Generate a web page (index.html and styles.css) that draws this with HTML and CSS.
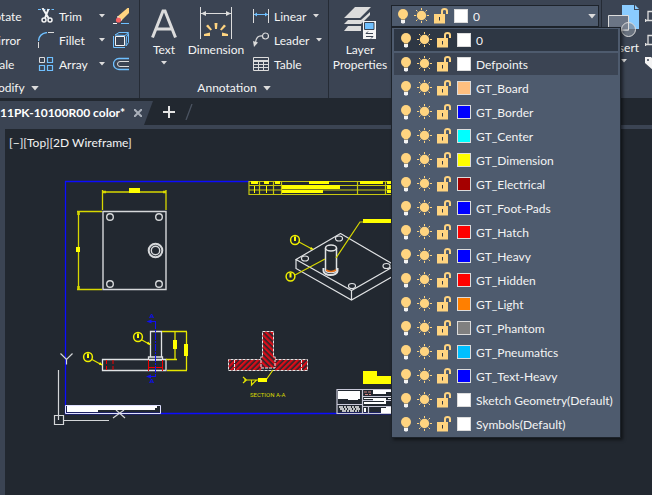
FILE: index.html
```html
<!DOCTYPE html>
<html lang="en">
<head>
<meta charset="utf-8">
<title>11PK-10100R00 color</title>
<link rel="stylesheet" href="styles.css">
</head>
<body>
<svg class="defs" width="0" height="0" aria-hidden="true">
  <symbol id="bulb" viewBox="0 0 16 16">
    <circle cx="8" cy="6" r="5" fill="#ffd480"/><path d="M5 8h6l-1 3.500H6z" fill="#ffd480"/>
    <path d="M6 12h4v2.500l-1 1H7l-1-1z" fill="#f4f4f4"/>
  </symbol>
  <symbol id="sun" viewBox="0 0 16 16">
    <circle cx="7.500" cy="7.500" r="4.700" fill="#ffd480"/>
    <path d="M7.500 0v2M7.500 13v2M0 7.500h2M13 7.500h2M2 2l1.500 1.500M13 2l-1.500 1.500M2 13l1.500-1.500M13 13l-1.500-1.500" stroke="#ffd480" stroke-width="1"/>
  </symbol>
  <symbol id="lock" viewBox="0 0 16 16">
    <path d="M1 6h11v9.500H1z" fill="#ffd480"/><path d="M9 6V3q0-2 2.500-2T14 3v3" fill="none" stroke="#ffd480" stroke-width="2"/>
    <path d="M6.500 9v3.500" stroke="#2e3744" stroke-width="1"/>
  </symbol>
  <symbol id="caret" viewBox="0 0 6 4"><path d="M0 0h6L3 3.500z" fill="#dcdcdc"/></symbol>
  <symbol id="balloon" viewBox="-6 -6 12 12"><circle r="4.400" fill="none" stroke="#ee0" stroke-width="1.500"/><path d="M0-3.500v4.500" stroke="#ff0" stroke-width="2"/></symbol>
</svg>

<header class="ribbon">
  <section class="panel modify">
    <div class="panel-body modify-grid">
      <button class="tool"><span>Rotate</span></button>
      <button class="tool"><svg width="16" height="16" viewBox="0 0 16 16"><path d="M0 1.500h16" stroke="#6fc0ff" stroke-dasharray="3 1.500"/><path d="M4.500 0l6 10M10.500 1l-3.500 9" stroke="#f4f4f4" stroke-width="2"/><circle cx="6" cy="12" r="2" fill="none" stroke="#f4f4f4" stroke-width="1.500"/><circle cx="12" cy="12" r="2" fill="none" stroke="#f4f4f4" stroke-width="1.500"/></svg><span>Trim</span></button>
      <button class="drop" aria-label="Trim options"><svg class="caret"><use href="#caret"/></svg></button>
      <button aria-label="Erase"><svg width="16" height="16" viewBox="0 0 16 16"><path d="M14.500 0H16v5l-8 8-4-4z" fill="#ffd480"/><path d="M5 8l4 4-1 1-4-4z" fill="#f4f4f4"/><circle cx="5.500" cy="12" r="2.600" fill="#f86060"/><path d="M0 15.500h4" stroke="#f4f4f4"/><path d="M8 15.500h8" stroke="#6fc0ff"/></svg></button>
      <button class="tool"><span>Mirror</span></button>
      <button class="tool"><svg width="16" height="16" viewBox="0 0 16 16"><path d="M.5 9Q1 1.500 9 .5" fill="none" stroke="#6fc0ff" stroke-width="1.300"/><path d="M10 .5h6M.5 10v6" stroke="#dcdcdc"/></svg><span>Fillet</span></button>
      <button class="drop" aria-label="Fillet options"><svg class="caret"><use href="#caret"/></svg></button>
      <button aria-label="Explode"><svg width="16" height="16" viewBox="0 0 16 16" fill="none"><path d="M2.500 4.500h9v9h-9z" stroke="#f4f4f4"/><path d="M.5 4v11.500H12M2 3L6 .5h9.500L12 3.500zM13.500 5l2-3.500v9L13 14z" stroke="#6fc0ff"/></svg></button>
      <button class="tool"><span>Scale</span></button>
      <button class="tool"><svg width="16" height="16" viewBox="0 0 16 16" fill="none"><path d="M1.500 1.500h5v5h-5z" stroke="#dcdcdc"/><path d="M9.500 1.500h5v5h-5zM1.500 9.500h5v5h-5zM9.500 9.500h5v5h-5z" stroke="#6fc0ff" stroke-width="1.200"/></svg><span>Array</span></button>
      <button class="drop" aria-label="Array options"><svg class="caret"><use href="#caret"/></svg></button>
      <button aria-label="Offset"><svg width="16" height="16" viewBox="0 0 16 16" fill="none"><path d="M16 2.500H6a5.500 5.500 0 0 0 0 11h10" stroke="#6fc0ff" stroke-width="1.300"/><path d="M16 5.500H7a2.500 2.500 0 0 0 0 5h9" stroke="#dcdcdc"/></svg></button>
    </div>
    <button class="panel-title">Modify <svg class="caret big"><use href="#caret"/></svg></button>
  </section>

  <section class="panel annotation">
    <div class="panel-body">
      <button class="large text-tool"><svg width="32" height="32" viewBox="0 0 32 32"><path d="M4.500 30.500L15 4h2l10.500 26.500M8.500 22h15" fill="none" stroke="#dcdcdc" stroke-width="3"/></svg><span>Text</span><svg class="caret"><use href="#caret"/></svg></button>
      <button class="large dim-tool"><svg width="32" height="32" viewBox="0 0 32 32"><path d="M.5 0v32M31.500 0v32M1 6.500h30" stroke="#dcdcdc"/><path d="M1 6.500l5-2.500v5zM31 6.500l-5-2.500v5z" fill="#dcdcdc"/><path d="M14.500 16h3l-.5 6h-2zM6 19l2-1.500 4 5-1.500 1zM26 19l-2-1.500-4 5 1.500 1zM4 27l6-1.500V29H4zM28 27l-6-1.500V29h6z" fill="#ffd480"/></svg><span>Dimension</span></button>
      <div class="stack">
        <div><button class="tool"><svg width="16" height="16" viewBox="0 0 16 16"><path d="M.5 1v14M15.500 1v14" stroke="#dcdcdc"/><path d="M1 6.500h14" stroke="#6fc0ff"/><path d="M1 6.500l3-2v4zM15 6.500l-3-2v4z" fill="#6fc0ff"/></svg><span>Linear</span></button><button class="drop" aria-label="Linear options"><svg class="caret"><use href="#caret"/></svg></button></div>
        <div><button class="tool"><svg width="16" height="16" viewBox="0 0 16 16"><circle cx="12.500" cy="4" r="3" fill="none" stroke="#dcdcdc" stroke-width="1.200"/><path d="M9.500 4Q3 3 2.500 11" fill="none" stroke="#dcdcdc" stroke-width="1.200"/><path d="M0 9l5 1.500L1 15z" fill="#dcdcdc"/></svg><span>Leader</span></button><button class="drop" aria-label="Leader options"><svg class="caret"><use href="#caret"/></svg></button></div>
        <div><button class="tool"><svg width="16" height="16" viewBox="0 0 16 16"><path d="M.5 1.500h15v13H.5zM1 5.500h14M1 8.500h14M1 11.500h14M5.500 5v9M10.500 5v9" fill="none" stroke="#dcdcdc"/><path d="M1 4.500h14" stroke="#dcdcdc"/></svg><span>Table</span></button></div>
      </div>
    </div>
    <button class="panel-title">Annotation <svg class="caret big"><use href="#caret"/></svg></button>
  </section>

  <section class="panel layers">
    <button class="large layer-props"><svg width="32" height="32" viewBox="0 0 32 32"><path d="M11 0h16L16 11H0zM4 13h13l9-8v3L17 17H0zM4 19h13v5H0z" fill="#dcdcdc"/><path d="M19 14h13v18H19z" fill="#f4f4f4"/><path d="M20.500 15.500h9.500v7h-9.500z" fill="#6fc0ff" stroke="#3b4453"/><path d="M22 26.500h7M22 29.500h7M24 24.500l-2 2M27 31.500l2-2" stroke="#3b4453"/></svg><span>Layer<br>Properties</span></button>
    <div class="layer-control">
      <div class="combo">
        <svg class="icon"><use href="#bulb"/></svg><svg class="icon"><use href="#sun"/></svg><svg class="icon"><use href="#lock"/></svg><i class="swatch white"></i>
        <select aria-label="Layer"><option>0</option><option>Defpoints</option><option>GT_Board</option><option>GT_Border</option></select>
        <svg class="caret big"><use href="#caret"/></svg>
      </div>
      <ul class="layer-list" role="listbox" aria-label="Layers" id="layers"></ul>
    </div>
  </section>

  <section class="panel insert">
    <button class="large"><svg width="32" height="32" viewBox="0 0 32 32"><path d="M14 0h12v5h5v19H14z" fill="#8accff"/><path d="M27 0l4 4h-4z" fill="#8accff"/><path d="M.5 10.500h20v15H.5z" fill="#6b7585" stroke="#dcdcdc"/><circle cx="20.500" cy="24.500" r="7" fill="#7d8693" fill-opacity=".7" stroke="#dcdcdc"/><path d="M20.500 17v8H13" fill="none" stroke="#dcdcdc"/></svg><span>Insert</span><svg class="caret"><use href="#caret"/></svg></button>
    <div class="stack">
      <button aria-label="Edit block"><svg width="16" height="16" viewBox="0 0 16 16"><path d="M3 5V3.500h12M3 4v8M0 12.500h10M.5 11v3" fill="none" stroke="#dcdcdc" stroke-width="1.300"/></svg></button>
      <button aria-label="Create block"><svg width="16" height="16" viewBox="0 0 16 16"><path d="M3 5V3.500h12M3 4v8M0 12.500h10M.5 11v3" fill="none" stroke="#dcdcdc" stroke-width="1.300"/></svg></button>
      <button aria-label="Edit attributes"><svg width="16" height="16" viewBox="0 0 16 16"><path d="M0 1h6l9 8-6 6-9-8z" fill="#f4f4f4"/><circle cx="3" cy="4" r="1" fill="#3b4453"/></svg></button>
    </div>
  </section>
</header>

<nav class="tabs">
  <div class="file-tab"><a href="#drawing">11PK-10100R00 color*</a><button aria-label="Close"><svg width="8" height="8" viewBox="0 0 8 8"><path d="M0 0l8 8M8 0L0 8" stroke="#aab0ba" stroke-width="2"/></svg></button></div>
  <button aria-label="New tab"><svg width="12" height="12" viewBox="0 0 12 12"><path d="M6 0v12M0 6h12" stroke="#e4e4e4" stroke-width="2"/></svg></button>
  <svg width="8" height="16" viewBox="0 0 8 16"><path d="M7 0L1 16" stroke="#4b5361" stroke-width="1.300"/></svg>
</nav>

<main class="viewport" id="drawing">
  <div class="view-controls"><button>[−]</button><button>[Top]</button><button>[2D Wireframe]</button></div>
  <svg class="drawing" viewBox="5 129 647 366" preserveAspectRatio="xMinYMin slice" fill="none">
    <defs>
      <pattern id="hatch" width="4" height="4" patternUnits="userSpaceOnUse" patternTransform="rotate(45)"><path d="M0 0h2.400v4H0z" fill="#d90d18"/></pattern>
      <pattern id="hatch2" width="4" height="4" patternUnits="userSpaceOnUse" patternTransform="rotate(-45)"><path d="M0 0h2.400v4H0z" fill="#d90d18"/></pattern>
    </defs>
    <path d="M249 181.500H65.500v232H391" stroke="#0c0cff" stroke-width="1.300"/>
    <!-- plan view -->
    <g stroke="#d8d800" stroke-width="1.300">
      <path d="M103 192h63M102.500 190v20M166 190v20M78.500 211v79M77 211.500h25M77 289.500h25"/>
      <path d="M103 192h3M163 192h3M78.500 212v3M78.500 286v3" stroke-width="2.500"/>
    </g>
    <path d="M129 188h11v5h-11zM76 247h4v5h-4z" fill="#ff0"/>
    <g stroke="#d6d8da" stroke-width="1.400">
      <path d="M103 211.500h63v78h-63z"/>
      <circle cx="110" cy="217" r="3.300"/><circle cx="159" cy="217" r="3.300"/><circle cx="110" cy="284" r="3.300"/><circle cx="159" cy="284" r="3.300"/>
      <circle cx="155.500" cy="250.500" r="6.800" stroke-width="2"/><circle cx="155.500" cy="250.500" r="4.200"/>
    </g>
    <!-- front view -->
    <g stroke="#e0e2e4" stroke-width="1.300">
      <path d="M102.500 359.500H166v11h-63.500zM150.500 331.500h11V357h-11zM148.500 357h14v3h-14z"/>
    </g>
    <path d="M148.500 360v11M162.500 360v11M148 367.500h14" stroke="#f00000"/>
    <path d="M106.500 360v11M113 360v11" stroke="#f00000" stroke-dasharray="4 2"/>
    <path d="M155.500 322v54" stroke="#1010f0" stroke-dasharray="7 1 2 1"/>
    <path d="M150 321.500h6M150 376.500h6M151.500 314l-2 4M151.500 314l2 4M150 317h3M151.500 379l-2 4M151.500 379l2 4M150 382h3" stroke="#1010f0"/>
    <path d="M146.500 321.500l5-2v4zM146 376.500l5-2v4z" fill="#1010f0"/>
    <path d="M162 331.500h25M175 332v27M186.500 332v38M166 359.500h11M167 370.500h20M141 339.500l9 5M92 359.500l10 5.500" stroke="#e6e600" stroke-width="1.300"/>
    <path d="M173 340h4v9h-4zM184 344h4v12h-4zM147 344l4 1-3-3.500zM99 364.500l4 1-3-3.500z" fill="#ff0"/>
    <use href="#balloon" x="132" y="331" width="12" height="12"/><use href="#balloon" x="82" y="351" width="12" height="12"/>
    <!-- coordinate axes -->
    <path d="M58.500 370v50M63 420.500h46M54.500 415.500h9v9h-9zM60.500 353.500l6 6 6-6M66.500 359v5.500M113 418l11-8M125 418l-9-8" stroke="#d4d6d8" stroke-width="1.200"/>
    <path d="M65.500 405.500h95v8h-95z" stroke="#dfe0ff"/><path d="M67 406h90v2h-2v2H98v2H67z" fill="#fff"/>
    <!-- revision table -->
    <path d="M248.500 181.500H391M248.500 185.500H391M248.500 190H391M248.500 194.500H391M249 181v14M259.500 181v14M273.500 181v14M281.500 181v14M357.500 181v14M385.500 181v14" stroke="#c8c810" stroke-width="1.200"/>
    <path d="M251 181h7v3h-7zM264 181h5v3h-5zM275 181h5v3h-5zM309 181h20v3h-20zM360 181h23v3h-23zM387 181h5v3h-5zM282 185h58v4h-58zM282 190h41v3h-41zM387 185h5v4h-5zM387 190h5v3h-5zM254 186h1v7h-1zM266 186h1v7h-1z" fill="#ff0"/>
    <!-- isometric view -->
    <g stroke="#e0e2e4" stroke-width="1.200">
      <path d="M340.500 233.500L296 259.500l55.500 31 42-24M340.500 233.500l53 31M296 259.500v9l55.500 31.500 42-24M351.500 290.500v9.500"/>
      <ellipse cx="339" cy="238.500" rx="3.500" ry="2.500"/><ellipse cx="305" cy="258.500" rx="3.500" ry="2.500"/><ellipse cx="386.500" cy="266" rx="3.500" ry="2.500"/><ellipse cx="352" cy="286" rx="3.500" ry="2.500"/>
      <path d="M323.500 268v3a7 4 0 0 0 14 0v-3" stroke-width="2"/>
      <path d="M325.500 248v22a5.500 2.500 0 0 0 11 0v-22" fill="#222830" stroke-width="1.500"/>
      <ellipse cx="331" cy="248" rx="5.500" ry="3" fill="#222830" stroke-width="1.600"/>
      <path d="M326 270q5 3 10 0" stroke="#e87018" stroke-width="1.500"/>
    </g>
    <path d="M363 222h-3l-24 36M299 242l13 7M295 275l30-16" stroke="#d8d800" stroke-width="1.200"/>
    <path d="M363 219h29v4h-29zM310 249.500l4 0-3-2.500z" fill="#ff0"/>
    <use href="#balloon" x="289" y="234" width="12" height="12"/><use href="#balloon" x="284.500" y="270.500" width="12" height="12"/>
    <!-- section view -->
    <path d="M228.500 359.500h33v11h-33zM275 359.500h32.500v11H275z" fill="url(#hatch)"/>
    <path d="M262.500 331.500h11V357h2v11h-15v-11h2z" fill="url(#hatch2)"/>
    <path d="M262.500 331.500h11V357h2v2.500h32v11h-79v-11h32V357h2zM234.500 360v10M301.500 360v10M261 360v8h14v-8" stroke="#e4e4e4" stroke-dasharray="3 1"/>
    <path d="M273 370l-7 10h-22M243 377l3.500 3-3.500 3M251.500 380v5l5-5" stroke="#e6e600" stroke-width="1.200"/>
    <path d="M258 378h5v4h-5zM263 378h4v4h-4z" fill="#ff0"/>
    <text class="section-label" x="250" y="397">SECTION A-A</text>
    <!-- title block -->
    <path d="M363 371h14v5h15v8h-29z" fill="#ff0"/>
    <path d="M336.500 389.500H392M336.500 413.500H392M337 389v25M362.500 389v25M337 404.500h25M363 396.500h29M363 400.500h29M363 406.500h29M368.500 406v8" stroke="#c8c8d8" stroke-width="1.200"/>
    <path d="M338 391h22v8h-2v1h-10v-1h-10zM373 390h19v2h-6v2h-13zM364 398h14v1h-14zM373 398h13v6h-2v-3h-11zM364 402h21v2h-21zM381 408h5v-1h6v6h-11zM388 398h4v1h-4zM364 408h2v4h-2z" fill="#fff"/>
    <path d="M339 407h21M340 409h20M342 411h17" stroke="#f4f4f4" stroke-width="1.500" stroke-dasharray="4 1 2 1"/>
    <path d="M364 392h7M365 394.500h6" stroke="#d08080" stroke-dasharray="3 1"/>
  </svg>
</main>
<script src="layers.js"></script>
</body>
</html>
```
FILE: styles.css
```css
* { box-sizing: border-box; }
body {
  margin: 0;
  min-height: 100vh;
  display: flex;
  flex-direction: column;
  overflow: hidden;
  background: #3b4453;
  color: #f4f4f4;
  font: 12px/16px Lato, "Open Sans", sans-serif;
}
button, select {
  font: inherit;
  color: inherit;
  background: none;
  border: 0;
  padding: 0;
  white-space: nowrap;
}
button { display: flex; align-items: center; }
svg { flex: none; display: block; }
.defs { position: absolute; }
.caret { width: 6px; height: 4px; }
.caret.big { width: 8px; height: 5px; }
.icon { width: 16px; height: 16px; }

.ribbon { display: flex; height: 98px; }
.panel {
  flex: none;
  display: flex;
  flex-direction: column;
  border-right: 1px solid #252b35;
}
.panel-body { display: flex; height: 80px; padding-top: 4px; }
.panel-title { gap: 6px; align-self: center; }

.modify { width: 153px; margin-left: -13px; }
.modify-grid {
  display: grid;
  grid-template-columns: 51px 53px 22px 16px;
  grid-template-rows: repeat(3, 24px);
}
.modify .panel-title { align-self: flex-start; }
.tool { gap: 5px; }
.tool span, .layer-list span { padding-top: 1px; white-space: nowrap; line-height: 17px; }
.drop { justify-content: center; }

.annotation { width: 189px; }
.large { flex-direction: column; justify-content: flex-start; gap: 3px; }
.large span { text-align: center; }
.text-tool { margin-left: 8px; width: 32px; padding-top: 3px; }
.dim-tool { margin-left: 4px; width: 64px; padding-top: 3px; }
.stack { display: grid; grid-template-rows: repeat(3, 24px); margin-left: 5px; }
.stack div { display: flex; gap: 7px; }

.layers { flex-direction: row; width: 273px; }
.layer-props { width: 62px; padding-top: 7px; }
.layer-props span { line-height: 15px; }
.layer-control { position: relative; width: 208px; padding-top: 5px; }
.combo {
  display: flex;
  align-items: center;
  gap: 3px;
  height: 22px;
  padding: 0 2px 0 3px;
  background: #4e5b6e;
  border: 1px solid #1d232b;
}
.combo select { flex: 1; appearance: none; padding-top: 1px; }
.swatch { flex: none; width: 14px; height: 14px; margin: 0 2px; border: 1px solid #dcdcdc; }
.layer-list {
  position: absolute;
  z-index: 2;
  top: 27px;
  left: 0;
  width: 230px;
  margin: 0;
  padding: 1px 2px 2px;
  display: grid;
  gap: 2px;
  list-style: none;
  background: #4e5b6e;
  border: 1px solid #1d232b;
  box-shadow: 2px 2px 3px rgba(0, 0, 0, .5);
}
.layer-list li { display: flex; align-items: center; gap: 3px; height: 22px; padding-left: 4px; }
.layer-list .current { background: #2e3744; }
.layer-list .hover { background: #3b4453; }

.white { background: #fff; }
.board { background: #ffbf7f; }
.blue { background: #00f; }
.cyan { background: #0ff; }
.yellow { background: #ff0; }
.maroon { background: #a50000; }
.red { background: #f00; }
.orange { background: #ff7f00; }
.gray { background: #808080; }
.sky { background: #00bfff; }

.insert { flex: 1; flex-direction: row; border: 0; overflow: hidden; min-width: 0; }
.insert .large { margin-left: 3px; padding-top: 5px; width: 38px; flex: none; }
.insert .stack { margin-left: 2px; padding-top: 4px; }

.tabs {
  display: flex;
  align-items: center;
  gap: 10px;
  height: 27px;
  padding-top: 1px;
  background: #222830;
}
.file-tab {
  display: flex;
  align-items: center;
  justify-content: space-between;
  align-self: flex-end;
  width: 153px;
  height: 24px;
  padding-right: 11px;
  background: #3b4453;
  clip-path: polygon(0 0, 100% 0, 144px 100%, 0 100%);
}
.file-tab a { color: #fff; font-weight: 700; text-decoration: none; white-space: nowrap; }

.viewport {
  position: relative;
  flex: 1;
  margin: 4px 0 0 5px;
  background: #222830;
  overflow: hidden;
}
.view-controls { position: absolute; top: 6px; left: 4px; display: flex; }
.drawing { width: 647px; height: 366px; }
.section-label { fill: #d8d800; font: 6px Roboto, sans-serif; }
```
FILE: layers.js
```js
const layers = [
  ["0", "white"], ["Defpoints", "white"], ["GT_Board", "board"], ["GT_Border", "blue"],
  ["GT_Center", "cyan"], ["GT_Dimension", "yellow"], ["GT_Electrical", "maroon"],
  ["GT_Foot-Pads", "blue"], ["GT_Hatch", "red"], ["GT_Heavy", "blue"], ["GT_Hidden", "red"],
  ["GT_Light", "orange"], ["GT_Phantom", "gray"], ["GT_Pneumatics", "sky"],
  ["GT_Text-Heavy", "blue"], ["Sketch Geometry(Default)", "white"], ["Symbols(Default)", "white"]
];
const icon = id => `<svg class="icon"><use href="#${id}"/></svg>`;
document.getElementById("layers").innerHTML = layers.map(([name, color], i) =>
  `<li role="option" aria-selected="${i === 0}" class="${["current", "hover"][i] || ""}">` +
  `${icon("bulb")}${icon("sun")}${icon("lock")}<i class="swatch ${color}"></i><span>${name}</span></li>`
).join("");
```
